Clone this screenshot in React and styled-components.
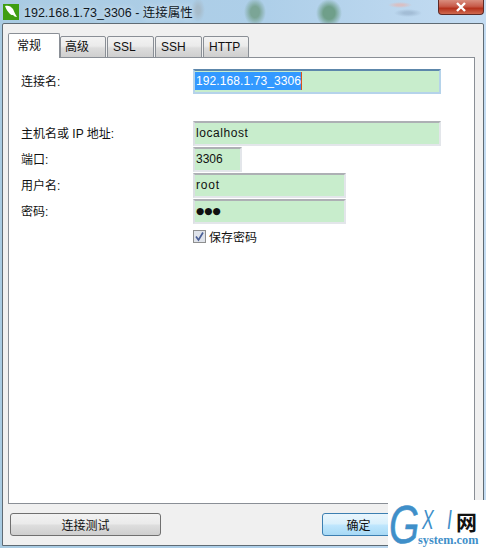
import React from 'react';
import styled, { createGlobalStyle } from 'styled-components';

const Global = createGlobalStyle`
  html, body { margin: 0; padding: 0; width: 486px; height: 548px; overflow: hidden; }
  #root { width: 486px; height: 548px; }
`;
const UI = `"Liberation Sans", "Noto Sans CJK SC", sans-serif`;

const Frame = styled.div`
  position: relative;
  width: 486px; height: 548px; box-sizing: border-box;
  display: flex; flex-direction: column;
  font-family: ${UI}; font-size: 12px; color: #111;
  overflow: hidden;
  background:
    radial-gradient(ellipse 13px 14px at 329px 13px, #6f9f8a 0 45%, transparent 100%),
    radial-gradient(ellipse 11px 14px at 255px 12px, #7ba596 0 40%, transparent 100%),
    radial-gradient(ellipse 12px 3px at 400px 5px, #d9c0c4 0 30%, transparent 100%),
    radial-gradient(ellipse 14px 4px at 408px 13px, #a3bdd6 0 30%, transparent 100%),
    radial-gradient(ellipse 7px 12px at 198px 10px, #a7bccb 0 30%, transparent 100%),
    linear-gradient(90deg, #a9cbe2 0%, #aecfe9 55%, #c4dcf2 100%);
`;
const TitleBar = styled.div`
  height: 23px; flex: none; display: flex; align-items: center; gap: 5px;
  padding: 0 2px 0 3px; box-sizing: border-box;
`;
const AppIcon = styled.svg`width: 16px; height: 16px; flex: none;`;
const Title = styled.span`
  font-size: 12.5px; color: #10181f; white-space: nowrap; flex: 1;
  text-shadow: 0 0 6px rgba(255,255,255,.8);
`;
const CloseBtn = styled.div`
  align-self: flex-start; width: 46px; height: 15px; box-sizing: border-box;
  border: 1px solid #5e2a26; border-top: 0; border-radius: 0 0 4px 4px;
  background: linear-gradient(180deg, #d98d7e 0%, #c75b4a 45%, #b5321d 60%, #cf6a50 100%);
  display: flex; align-items: center; justify-content: center;
`;
const Client = styled.div`
  flex: 1; margin: 0 2px 2px 2px; box-sizing: border-box;
  border: 1px solid #5f6b74; border-radius: 2px 2px 0 0;
  background: #f0f0f0; padding: 9px 8px 9px 5px;
  display: flex; flex-direction: column;
`;
const TabStrip = styled.div`
  display: flex; height: 25px; flex: none; align-items: flex-end; position: relative; z-index: 1;
`;
const Tab = styled.div`
  box-sizing: border-box; width: ${p => p.$w}px; margin-right: ${p => p.$gap}px;
  height: ${p => (p.$active ? 25 : 22)}px;
  border: 1px solid #8a8f96;
  border-bottom: ${p => (p.$active ? '0' : '1px solid #8a8f96')};
  background: ${p => (p.$active ? '#fff' : 'linear-gradient(180deg, #f3f3f3 0%, #ebebeb 45%, #dcdcdc 55%, #cfcfcf 100%)')};
  border-radius: 2px 2px 0 0;
  padding: ${p => (p.$active ? '5px 0 0 8px' : `3px 0 0 ${p.$pad}px`)};
  font-size: 12px; line-height: 15px; color: #111;
`;
const TabPage = styled.div`
  flex: 1; margin-top: -1px; box-sizing: border-box;
  border: 1px solid #8a8f96; background: #fff;
  padding: 11px 33px 0 12px;
  display: flex; flex-direction: column;
`;
const Row = styled.div`
  display: flex; align-items: center; margin-bottom: ${p => p.$mb ?? 1}px;
`;
const Label = styled.label`
  width: 171px; margin-right: 1px; flex: none; font-size: 12px; line-height: 16px; color: #111;
`;
const Field = styled.div`
  box-sizing: border-box; height: 25px; width: ${p => p.$w}px; flex: none;
  background: #c8edcc; padding: 0 2px 1px 1px;
  border: 2px solid #e3e6ea; border-top-color: #adb0b4; border-left-color: #dcdfe3;
  ${p => p.$focus && 'border-color: #5d87ab #b5d3ea #b5d3ea #b5d3ea; padding-left: 0;'}
  display: flex; align-items: center;
  font-size: 12px; letter-spacing: ${p => p.$ls ?? 0}px; color: #111; white-space: nowrap;
`;
const Selected = styled.span`
  background: #3399ff; color: #fff; height: 18px; line-height: 18px; padding-left: 1px;
  letter-spacing: .1px; border-right: 1px solid #d9541e;
`;
const Dots = styled.span`
  font-size: 9.5px; line-height: 1; font-family: "DejaVu Sans", sans-serif;
`;
const CheckRow = styled.div`
  display: flex; align-items: center; gap: 3px; margin: 5px 0 0 172px; height: 15px;
  font-size: 12px;
`;
const Check = styled.svg`width: 13px; height: 13px; flex: none;`;
const Footer = styled.div`
  flex: none; display: flex; justify-content: space-between; align-items: center;
  padding: 9px 80px 0 2px;
`;
const Button = styled.div`
  box-sizing: border-box; width: ${p => p.$w}px; height: 23px;
  display: flex; align-items: center; justify-content: center;
  border-radius: 3px; font-size: 12px; color: #111;
  border: 1px solid ${p => (p.$primary ? '#3c7fb1' : '#707070')};
  background: ${p => (p.$primary
    ? 'linear-gradient(180deg, #eaf6fd 0%, #d9f0fc 45%, #bee6fd 55%, #a7d9f5 100%)'
    : 'linear-gradient(180deg, #f2f2f2 0%, #ebebeb 45%, #dddddd 55%, #cfcfcf 100%)')};
`;
const Watermark = styled.div`
  position: absolute; right: 0; bottom: 0; width: 98px; height: 48px;
  background: #fff;
`;
const BigG = styled.span`
  position: absolute; left: 1px; top: 0; font: italic 54px/48px "Liberation Sans", sans-serif; color: #3f8fc9;
  transform: scaleX(.72); transform-origin: left center;
  -webkit-text-stroke: .6px #3f8fc9;
`;
const Letter = styled.span`
  position: absolute; left: ${p => p.$left}px; top: 8px; font: italic 27px/24px "Liberation Sans", sans-serif;
  color: #3f8fc9; transform: scaleX(.65); transform-origin: left center;
`;
const Wang = styled.span`
  position: absolute; left: 68px; top: 10px; font: bold 21px/22px "Noto Sans CJK SC", sans-serif; color: #111;
`;
const Domain = styled.span`
  position: absolute; left: 30px; top: 34px; font: bold 12.3px/13px "Liberation Serif", serif; color: #3f8fc9;
`;

export default function App() {
  return (
    <Frame>
      <Global />
      <TitleBar>
        <AppIcon viewBox="0 0 16 16">
          <rect width="16" height="16" fill="#3f9e12" />
          <path d="M2 2c3-1 6 0 8 3 1 2 2 5 4 8-2 0-3-1-4-2-1 0-2 0-3-1C5 8 3 5 2 2z" fill="#fff" />
        </AppIcon>
        <Title>192.168.1.73_3306 - 连接属性</Title>
        <CloseBtn>
          <svg width="12" height="10" viewBox="0 0 12 10">
            <path d="M2 1l8 8M10 1l-8 8" stroke="#fff" strokeWidth="2.4" />
          </svg>
        </CloseBtn>
      </TitleBar>
      <Client>
        <TabStrip>
          <Tab $w={52} $gap={0} $active>常规</Tab>
          <Tab $w={46} $gap={1} $pad={4}>高级</Tab>
          <Tab $w={47} $gap={1} $pad={5}>SSL</Tab>
          <Tab $w={47} $gap={1} $pad={5}>SSH</Tab>
          <Tab $w={46} $gap={0} $pad={5}>HTTP</Tab>
        </TabStrip>
        <TabPage>
          <Row $mb={27}>
            <Label>连接名:</Label>
            <Field $w={248} $focus><Selected>192.168.1.73_3306</Selected></Field>
          </Row>
          <Row>
            <Label>主机名或 IP 地址:</Label>
            <Field $w={248} $ls={0.55}>localhost</Field>
          </Row>
          <Row>
            <Label>端口:</Label>
            <Field $w={49}>3306</Field>
          </Row>
          <Row>
            <Label>用户名:</Label>
            <Field $w={153} $ls={0.8}>root</Field>
          </Row>
          <Row $mb={0}>
            <Label>密码:</Label>
            <Field $w={153}><Dots>●●●</Dots></Field>
          </Row>
          <CheckRow>
            <Check viewBox="0 0 13 13">
              <rect x=".5" y=".5" width="12" height="12" fill="#dfe3ea" stroke="#8e8f8f" />
              <path d="M3 6.5l2.5 3.5L10 2.5" fill="none" stroke="#4a5f97" strokeWidth="1.7" />
            </Check>
            保存密码
          </CheckRow>
        </TabPage>
        <Footer>
          <Button $w={151}>连接测试</Button>
          <Button $w={73} $primary>确定</Button>
        </Footer>
      </Client>
      <Watermark>
        <BigG>G</BigG>
        <Letter $left={34}>X</Letter>
        <Letter $left={59}>I</Letter>
        <Wang>网</Wang>
        <Domain>system.com</Domain>
      </Watermark>
    </Frame>
  );
}
